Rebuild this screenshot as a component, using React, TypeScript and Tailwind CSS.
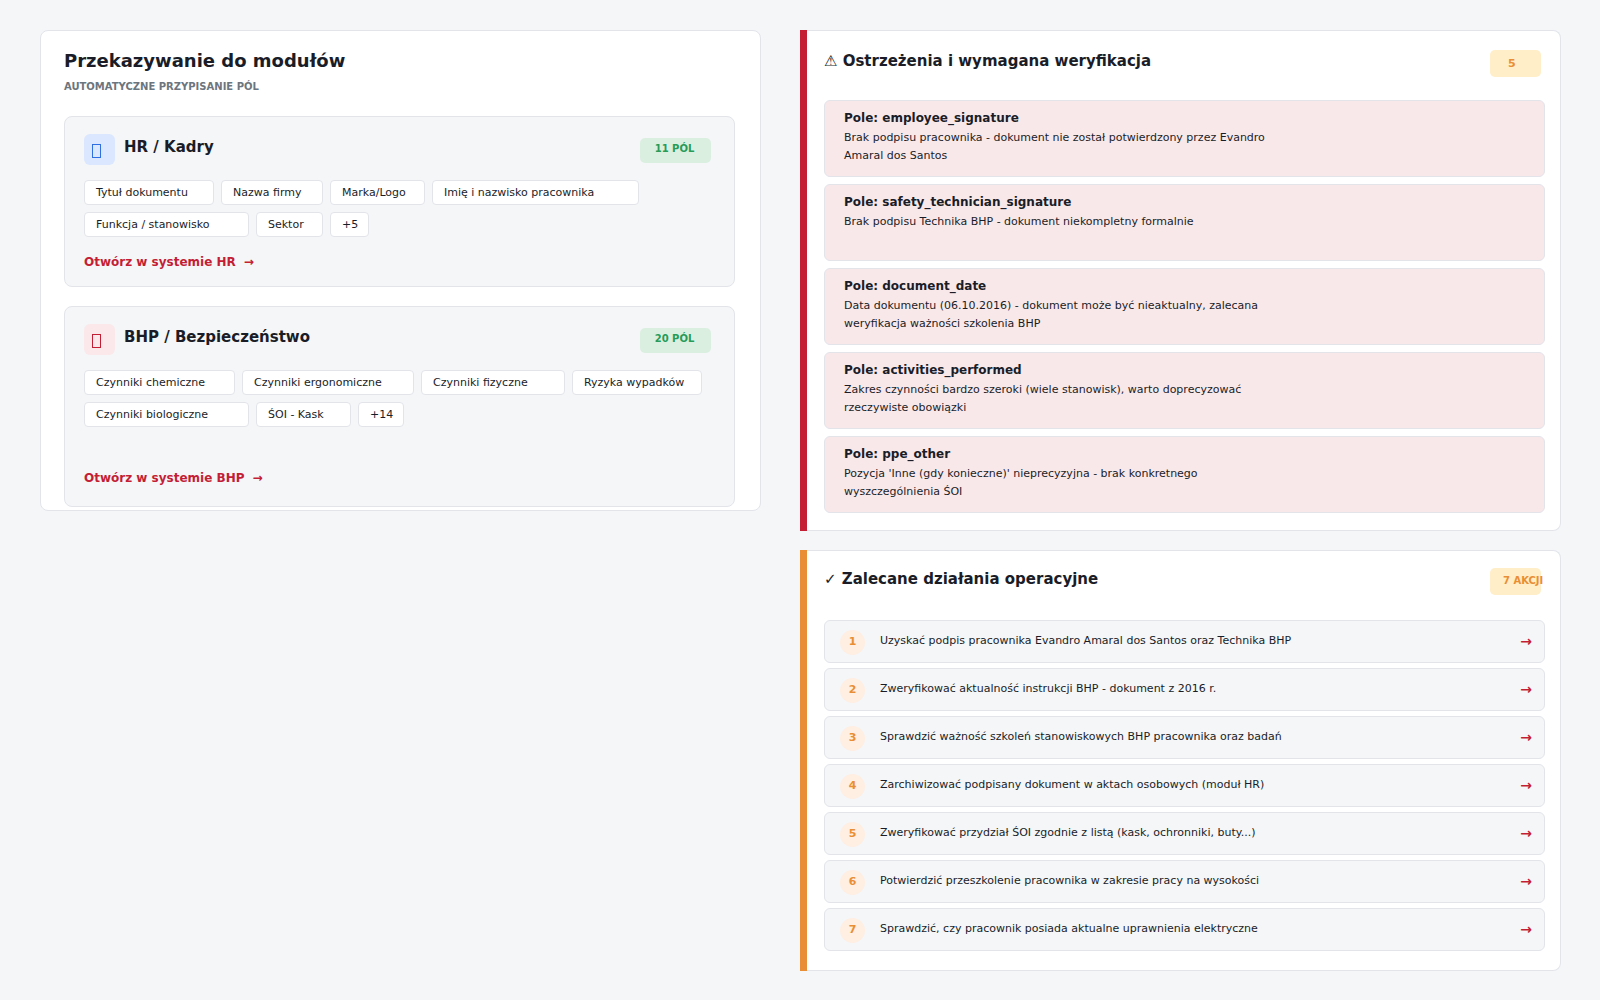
import { clsx } from "clsx";

type Module = {
  name: string;
  fields: string[];
  count: number;
  link: string;
  iconBox: string;
  tall?: boolean;
};

const MODULES: Module[] = [
  {
    name: "HR / Kadry",
    fields: ["Tytuł dokumentu", "Nazwa firmy", "Marka/Logo", "Imię i nazwisko pracownika", "Funkcja / stanowisko", "Sektor", "+5"],
    count: 11,
    link: "Otwórz w systemie HR",
    iconBox: "bg-[#dbe7ff] text-[#2f6fe4]",
  },
  {
    name: "BHP / Bezpieczeństwo",
    fields: ["Czynniki chemiczne", "Czynniki ergonomiczne", "Czynniki fizyczne", "Ryzyka wypadków", "Czynniki biologiczne", "ŚOI - Kask", "+14"],
    count: 20,
    link: "Otwórz w systemie BHP",
    iconBox: "bg-[#fae8ea] text-[#c41e35]",
    tall: true,
  },
];

const WARNINGS = [
  { field: "employee_signature", text: "Brak podpisu pracownika - dokument nie został potwierdzony przez Evandro Amaral dos Santos" },
  { field: "safety_technician_signature", text: "Brak podpisu Technika BHP - dokument niekompletny formalnie" },
  { field: "document_date", text: "Data dokumentu (06.10.2016) - dokument może być nieaktualny, zalecana weryfikacja ważności szkolenia BHP" },
  { field: "activities_performed", text: "Zakres czynności bardzo szeroki (wiele stanowisk), warto doprecyzować rzeczywiste obowiązki" },
  { field: "ppe_other", text: "Pozycja 'Inne (gdy konieczne)' nieprecyzyjna - brak konkretnego wyszczególnienia ŚOI" },
];

const ACTIONS = [
  "Uzyskać podpis pracownika Evandro Amaral dos Santos oraz Technika BHP",
  "Zweryfikować aktualność instrukcji BHP - dokument z 2016 r.",
  "Sprawdzić ważność szkoleń stanowiskowych BHP pracownika oraz badań",
  "Zarchiwizować podpisany dokument w aktach osobowych (moduł HR)",
  "Zweryfikować przydział ŚOI zgodnie z listą (kask, ochronniki, buty...)",
  "Potwierdzić przeszkolenie pracownika w zakresie pracy na wysokości",
  "Sprawdzić, czy pracownik posiada aktualne uprawnienia elektryczne",
];

// chips are sized by character count, not by the rendered text
const chipWidth = (label: string) => label.length * 7 + 25;

function ModuleCard({ name, fields, count, link, iconBox, tall }: Module) {
  return (
    <article className="rounded-lg border border-[#e2e4ea] bg-[#f4f6f8] px-[19px] pt-[17px] pb-4">
      <div className="flex items-start gap-[9px]">
        <span className={clsx("h-[31px] w-[31px] shrink-0 rounded-md", iconBox)}>
          <svg viewBox="0 0 31 31" className="h-full w-full" fill="none" stroke="currentColor" aria-hidden="true">
            <rect x="8.5" y="10.5" width="8" height="13" />
          </svg>
        </span>
        <h2 className="text-[15px] leading-[27px] font-bold">{name}</h2>
        <span className="mt-1 mr-1 ml-auto h-[25px] w-[71px] rounded-[5px] bg-[#dbefe1] pr-[2px] text-center text-[10px] leading-[21px] font-bold text-[#279b57]">
          {count} PÓL
        </span>
      </div>

      <ul className="mt-[15px] flex flex-wrap gap-[7px]">
        {fields.map((f) => (
          <li
            key={f}
            style={{ width: chipWidth(f) }}
            className="rounded-[4px] border border-[#e2e4ea] bg-white pl-[11px] text-[11px] leading-[23px] whitespace-nowrap"
          >
            {f}
          </li>
        ))}
      </ul>

      <a
        href="#"
        className={clsx("flex w-fit gap-2 text-[12px] leading-4 font-bold text-[#c41e35]", tall ? "mt-[43px] mb-1" : "mt-[17px]")}
      >
        {link}
        <span>→</span>
      </a>
    </article>
  );
}

export default function App() {
  return (
    <main className="grid min-h-screen grid-cols-[721fr_761fr] items-start gap-[39px] bg-[#f4f6f8] py-[30px] pr-[39px] pl-10 font-['DejaVu_Sans',sans-serif] text-[#1a1d27]">
      <section className="rounded-[8px] border border-[#e2e4ea] bg-white pt-[18px] pr-[25px] pb-[3px] pl-[23px]">
        <h1 className="text-[18px] leading-6 font-bold">Przekazywanie do modułów</h1>
        <p className="mt-[6px] text-[10px] leading-4 font-bold text-[#6c757d] uppercase">Automatyczne przypisanie pól</p>
        <div className="mt-[21px] flex flex-col gap-[19px]">
          {MODULES.map((m) => (
            <ModuleCard key={m.name} {...m} />
          ))}
        </div>
      </section>

      <div className="flex flex-col gap-[19px]">
        <section className="flex">
          <div className="w-[7px] shrink-0 bg-[#c41e35]" />
          <div className="min-w-0 grow rounded-r-[8px] border border-l-0 border-[#e2e4ea] bg-white pt-[19px] pr-[15px] pb-[17px] pl-[17px]">
            <div className="flex items-start justify-between pr-1">
              <h2 className="text-[15px] leading-[22px] font-bold">⚠ Ostrzeżenia i wymagana weryfikacja</h2>
              <span className="h-[27px] w-[51px] rounded-[5px] bg-[#ffeec7] pl-[18px] text-[11px] leading-[27px] font-bold text-[#e98e34]">
                5
              </span>
            </div>
            <ul className="mt-[23px] flex flex-col gap-[7px]">
              {WARNINGS.map((w) => (
                <li key={w.field} className="min-h-[77px] rounded-md border border-[#e2e4ea] bg-[#f9e8ea] px-[19px] pt-[9px]">
                  <h3 className="text-[12px] leading-4 font-bold">Pole: {w.field}</h3>
                  <p className="mt-[3px] max-w-[440px] text-[11px] leading-[18px]">{w.text}</p>
                </li>
              ))}
            </ul>
          </div>
        </section>

        <section className="flex">
          <div className="w-[7px] shrink-0 bg-[#e98e34]" />
          <div className="min-w-0 grow rounded-r-[8px] border border-l-0 border-[#e2e4ea] bg-white pt-[17px] pr-[15px] pb-[19px] pl-[17px]">
            <div className="flex items-start justify-between pr-1">
              <h2 className="text-[15px] leading-[22px] font-bold">✓ Zalecane działania operacyjne</h2>
              <span className="h-[27px] w-[51px] rounded-[5px] bg-[#ffeec7] pl-[13px] text-[10px] leading-[25px] font-bold whitespace-nowrap text-[#e98e34]">
                7 AKCJI
              </span>
            </div>
            <ol className="mt-[25px] flex flex-col gap-[5px]">
              {ACTIONS.map((text, i) => (
                <li key={text} className="flex h-[43px] items-center rounded-md border border-[#e2e4ea] bg-[#f4f6f8] pr-3 pl-[15px]">
                  <span className="mt-[2px] h-[25px] w-[25px] shrink-0 rounded-full bg-[#ffeee2] text-center text-[11px] leading-[23px] font-bold text-[#e98e34]">
                    {i + 1}
                  </span>
                  <p className="ml-[15px] grow pb-[2px] text-[11px] leading-4">{text}</p>
                  <a href="#" aria-label={text} className="pb-[2px] text-[14px] leading-4 font-bold text-[#c41e35]">
                    →
                  </a>
                </li>
              ))}
            </ol>
          </div>
        </section>
      </div>
    </main>
  );
}
